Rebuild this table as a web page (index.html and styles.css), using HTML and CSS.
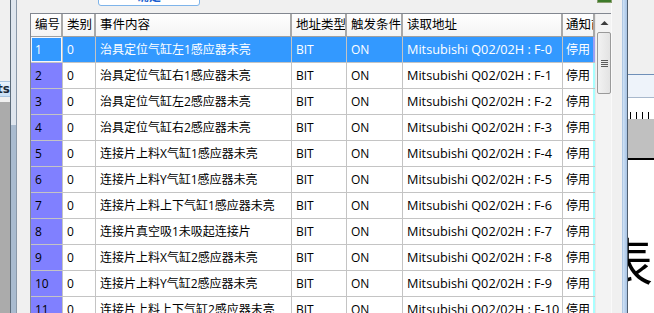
FILE: index.html
```html
<!DOCTYPE html>
<html>
<head>
<meta charset="utf-8">
<link rel="stylesheet" href="styles.css">
</head>
<body>
<div class="screen">
  <div class="left">
    <div class="left-pane">
      <div class="left-top"></div>
      <div class="tab">ts</div>
      <div class="left-dark"></div>
    </div>
    <div class="left-bar"><div class="left-thumb"></div></div>
  </div>
  <div class="center">
    <div class="topbar">
      <div class="btn"><span class="btn-text">确定</span></div>
    </div>
    <div class="listview">
      <div class="grid">
        <div class="row head">
          <div class="c c1">编号</div><div class="c c2">类别</div><div class="c c3">事件内容</div><div class="c c4">地址类型</div><div class="c c5">触发条件</div><div class="c c6">读取地址</div><div class="c c7">通知前</div><div class="c c8"></div>
        </div>
        <div id="rows"></div>
      </div>
      <div class="vscroll">
        <div class="arrow"><svg width="9" height="6" viewBox="0 0 9 6"><path d="M0.5 5 L4.5 1 L8.5 5 Z" fill="#3c3c3c"/></svg></div>
        <div class="thumb"><div class="grip"><i></i><i></i><i></i><i></i></div></div>
        <div class="track"></div>
      </div>
    </div>
  </div>
  <div class="gap">
    <div class="green"></div>
  </div>
  <div class="splitter"></div>
  <div class="right">
    <div class="r-gray"></div>
    <div class="r-band"></div>
    <div class="r-ruler"><div class="ticks"></div></div>
    <div class="r-gray2"></div>
    <div class="r-page"><span class="bigchar">表</span></div>
  </div>
</div>
<script>
var ev = ["治具定位气缸左1感应器未亮","治具定位气缸右1感应器未亮","治具定位气缸左2感应器未亮","治具定位气缸右2感应器未亮","连接片上料X气缸1感应器未亮","连接片上料Y气缸1感应器未亮","连接片上料上下气缸1感应器未亮","连接片真空吸1未吸起连接片","连接片上料X气缸2感应器未亮","连接片上料Y气缸2感应器未亮","连接片上料上下气缸2感应器未亮"];
var html = "";
for (var i = 0; i < ev.length; i++) {
  html += '<div class="row' + (i === 0 ? ' sel' : '') + '">' +
    '<div class="c c1 num">' + (i + 1) + '</div>' +
    '<div class="c c2">0</div>' +
    '<div class="c c3">' + ev[i] + '</div>' +
    '<div class="c c4">BIT</div>' +
    '<div class="c c5">ON</div>' +
    '<div class="c c6">Mitsubishi Q02/02H : F-' + i + '</div>' +
    '<div class="c c7">停用</div>' +
    '<div class="c c8"></div></div>';
}
document.getElementById("rows").innerHTML = html;
</script>
</body>
</html>
```

FILE: styles.css
```css
* { box-sizing: border-box; }
html, body { margin: 0; padding: 0; }
body {
  width: 654px; height: 313px; overflow: hidden;
  background: #f0f0f0;
  font-family: "Open Sans", "Noto Sans CJK SC", sans-serif;
  font-size: 12px; color: #000;
}
.screen { display: flex; width: 654px; height: 313px; overflow: hidden; }

/* left strip */
.left { width: 30px; display: flex; flex: none; }
.left-pane { width: 10px; display: flex; flex-direction: column; }
.left-top { height: 81px; background: #f0f0f0; }
.tab {
  height: 16px; overflow: hidden; white-space: nowrap; direction: rtl;
  background: linear-gradient(#e8f2fc, #c9dff5);
  border-top: 1px solid #a8c4e0; border-bottom: 1px solid #a8c4e0;
  font-family: "DejaVu Sans", sans-serif; font-weight: bold; font-size: 12px; line-height: 14px;
  color: #1a2a3a;
}
.left-dark { flex: 1; background: #ababab; border-top: 5px solid #f0f0f0; }
.left-bar {
  width: 7px; margin-right: 13px;
  border-left: 1px solid #5c6b7a; border-right: 1px solid #8a98a8;
  background: #dfe6ee; display: flex; flex-direction: column;
}
.left-thumb { margin-top: 125px; flex: 1; background: #a9bbcf; }

/* center */
.center { width: 581px; flex: none; display: flex; flex-direction: column; }
.topbar { height: 13px; position: relative; }
.btn {
  position: absolute; left: 68px; top: -14px; width: 102px; height: 20px;
  border: 1px solid #7eb4ea; border-radius: 3px; background: #fff;
  text-align: center; overflow: hidden;
}
.btn-text { color: #1a5fd0; font-weight: bold; font-size: 12px; line-height: 20px; }

.listview {
  flex: 1; display: flex;
  border-left: 1px solid #828790; border-top: 1px solid #828790;
  background: #fff; overflow: hidden;
}
.grid { width: 564px; flex: none; }
.row { display: flex; height: 26px; }
.c {
  flex: none; height: 26px; padding-left: 4px;
  border-right: 1px solid #c4c4c4; border-bottom: 1px solid #c4c4c4;
  white-space: nowrap; overflow: hidden;
  line-height: 25px;
}
.c1 { width: 32px; }
.c2 { width: 33px; }
.c3 { width: 196px; }
.c4 { width: 55px; }
.c5 { width: 56px; }
.c6 { width: 160px; padding-left: 4px; font-size: 12.7px; }
.c7 { width: 30px; padding-left: 3px; border-right: none; }
.c8 { width: 2px; padding: 0; border-right: none; background: #a8ffff; }

.head { height: 23px; background: linear-gradient(#ffffff, #f3f3f3); }
.head .c {
  height: 23px; line-height: 22px; border-bottom: 1px solid #a0a0a0;
  border-right: 2px solid #a8a8a8; font-size: 12.5px;
}
.head .c7 { border-right: none; }
.head .c8 { background: #f3f3f3; }

.num { background: #8080ff; }
.sel .c { background: #3399ff; color: #fff; }
.sel .c8 { background: #a0a0f0; }
.sel .c1 { box-shadow: inset 0 0 0 1px #f4f8ff; }

.vscroll { width: 17px; flex: none; background: #f3f3f3; display: flex; flex-direction: column; border-left: 1px solid #e8e8e8; }
.arrow { height: 17px; display: flex; align-items: center; justify-content: center; }
.thumb {
  height: 62px; margin: 1px 1px 0 1px;
  border: 1px solid #9a9a9a; border-radius: 2px;
  background: linear-gradient(90deg, #f2f2f2, #e3e3e3);
  display: flex; align-items: center; justify-content: center;
}
.grip { display: flex; flex-direction: column; gap: 1px; }
.grip i { display: block; width: 7px; height: 1px; background: #5a5a5a; }
.track { flex: 1; }

/* gap + splitter */
.gap { width: 11px; flex: none; background: #f0f0f0; position: relative; border-left: 1px solid #fafafa; }
.green { position: absolute; left: -15px; top: -2px; width: 15px; height: 5px; background: #3d7a2a; border: 1px solid #8aa070; }
.splitter {
  width: 6px; flex: none;
  background: linear-gradient(90deg, #9bb7d8 0, #cfe1f4 25%, #b9d2ee 60%, #a9c3e3 100%);
  border-right: 1px solid #4f5f70;
}

/* right panel */
.right { flex: 1; display: flex; flex-direction: column; overflow: hidden; }
.r-gray { height: 75px; background: #f0f0f0; border-bottom: 1px solid #6f8fb8; }
.r-band { height: 23px; background: #eef3fa; border-bottom: 1px solid #a8b8cc; }
.r-ruler { height: 21px; background: #fff; position: relative; }
.ticks {
  position: absolute; left: 2px; right: 0; bottom: 0; height: 7px;
  background: repeating-linear-gradient(90deg, #000 0 1px, transparent 1px 6px);
}
.r-gray2 { height: 41px; background: #c0c0c0; border-bottom: 2px solid #000; }
.r-page { flex: 1; background: #fff; position: relative; overflow: hidden; }
.bigchar {
  position: absolute; left: -27px; top: 74px;
  font-family: "Noto Sans CJK SC", serif; font-size: 52px; line-height: 52px; color: #000;
}
```
